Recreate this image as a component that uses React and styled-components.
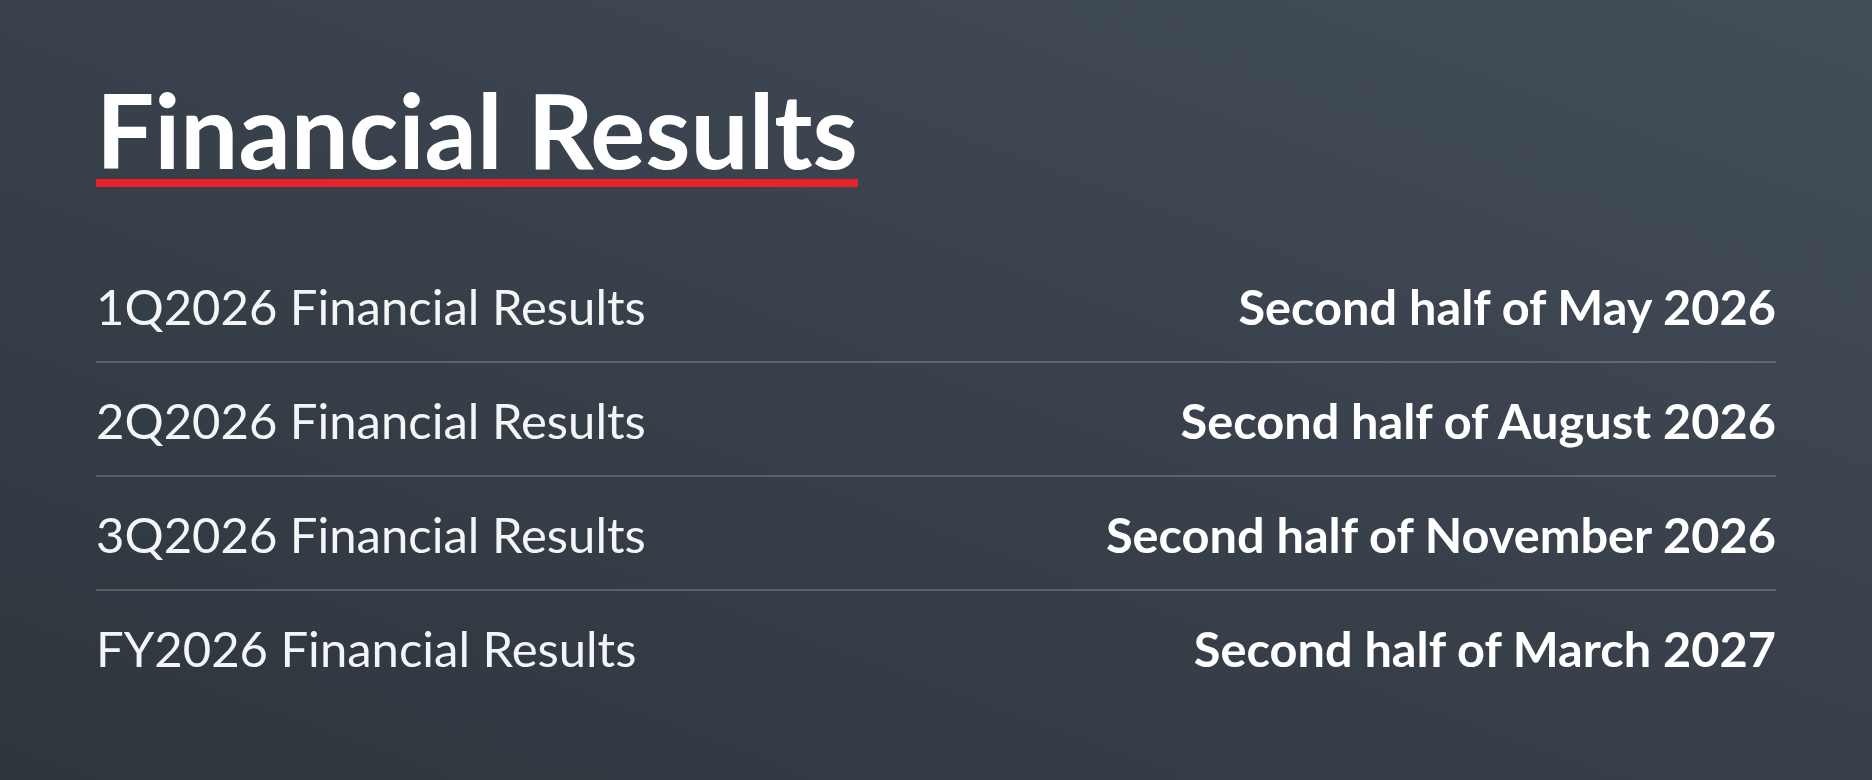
import React from "react";
import styled, { createGlobalStyle } from "styled-components";

const GlobalStyle = createGlobalStyle`
  html, body { margin: 0; padding: 0; }
  body {
    font-family: Lato, "Open Sans", sans-serif;
    background: #353d46;
  }
`;

const Page = styled.main`
  box-sizing: border-box;
  width: 1872px;
  height: 780px;
  padding: 79px 96px 0;
  background: linear-gradient(200deg, #434d58 0%, #39424c 45%, #2e353d 100%);
  color: #ffffff;
  overflow: hidden;
`;

const Title = styled.h1`
  display: inline-block;
  margin: 0;
  font-family: Lato, sans-serif;
  font-weight: 700;
  font-size: 103px;
  line-height: 100px;
  color: #ffffff;
  border-bottom: 8px solid #e8222a;
`;

const List = styled.ul`
  list-style: none;
  margin: 62px 0 0;
  padding: 0;
`;

const Row = styled.li`
  display: flex;
  justify-content: space-between;
  align-items: baseline;
  padding: 28px 0 26px;
  line-height: 58px;
  border-bottom: ${(p) => (p.$last ? "none" : "2px solid rgba(255, 255, 255, 0.18)")};
`;

const Label = styled.span`
  font-family: Lato, sans-serif;
  font-weight: 400;
  font-size: 49px;
  color: #f4f5f6;
`;

const When = styled.span`
  font-family: Lato, sans-serif;
  font-weight: 700;
  font-size: 48.7px;
  color: #ffffff;
`;

const rows = [
  ["1Q2026 Financial Results", "Second half of May 2026"],
  ["2Q2026 Financial Results", "Second half of August 2026"],
  ["3Q2026 Financial Results", "Second half of November 2026"],
  ["FY2026 Financial Results", "Second half of March 2027"],
];

export default function App() {
  return (
    <>
      <GlobalStyle />
      <Page>
        <Title>Financial Results</Title>
        <List>
          {rows.map(([label, when], i) => (
            <Row key={label} $last={i === rows.length - 1}>
              <Label>{label}</Label>
              <When>{when}</When>
            </Row>
          ))}
        </List>
      </Page>
    </>
  );
}
